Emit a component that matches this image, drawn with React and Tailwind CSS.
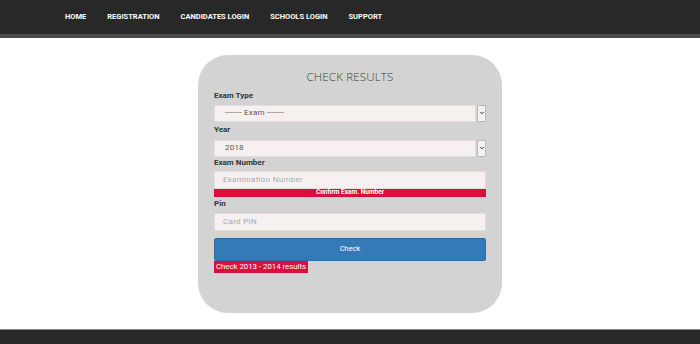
import { ChevronDown } from 'lucide-react'

const nav = ['HOME', 'REGISTRATION', 'CANDIDATES LOGIN', 'SCHOOLS LOGIN', 'SUPPORT']

function SelectBox({ value }) {
  return (
    <div className="flex h-[17px] gap-px">
      <div className="flex-1 bg-[#f6f0f0] border border-[#e2dcdc] flex items-center pl-[10px] text-[8px] text-[#555] tracking-[0.2px]">
        {value}
      </div>
      <div className="w-[9px] bg-[#f2f2f2] border border-[#b8b8b8] rounded-[1px] flex items-center justify-center">
        <ChevronDown size={6} strokeWidth={4} className="text-[#333]" />
      </div>
    </div>
  )
}

function Label({ children }) {
  return <div className="text-[8px] font-bold text-[#333] leading-none">{children}</div>
}

export default function App() {
  return (
    <div className="w-[700px] h-[344px] bg-white flex flex-col font-['Roboto',sans-serif]">
      {/* Top bar */}
      <div className="h-[34px] bg-[#282828] flex items-center pl-[65px] gap-[21px] shrink-0">
        {nav.map(n => (
          <span key={n} className="text-[7.5px] font-bold text-white">{n}</span>
        ))}
      </div>
      <div className="h-[4px] bg-[#4b4b4b] shrink-0" />

      {/* Card */}
      <div className="flex-1 flex justify-center pt-[17px]">
        <div className="w-[304px] h-[258px] bg-[#d3d3d3] rounded-[30px] px-[16px] pt-[16px]">
          <h1 className="text-center text-[11.5px] text-[#3a3a3a] font-['Open_Sans',sans-serif] font-light tracking-[0.2px] leading-none">
            CHECK RESULTS
          </h1>

          <div className="mt-[9px]"><Label>Exam Type</Label></div>
          <div className="mt-[5px]"><SelectBox value="------- Exam -------" /></div>

          <div className="mt-[4px]"><Label>Year</Label></div>
          <div className="mt-[6px]"><SelectBox value="2018" /></div>

          <div className="mt-[2px]"><Label>Exam Number</Label></div>
          <div className="mt-[4px] h-[18px] bg-[#f6f0f0] border border-[#e2dcdc] flex items-center pl-[8px] text-[8px] text-[#aaa] tracking-[0.3px]">
            Examination Number
          </div>
          <div className="h-[8px] bg-[#dc0f3c] flex items-center justify-center text-[6.5px] font-bold text-white leading-none">
            Confirm Exam. Number
          </div>

          <div className="mt-[3px]"><Label>Pin</Label></div>
          <div className="mt-[5px] h-[18px] bg-[#f6f0f0] border border-[#e2dcdc] flex items-center pl-[8px] text-[8px] text-[#aaa] tracking-[0.3px]">
            Card PIN
          </div>

          <div className="mt-[7px] h-[23px] bg-[#337ab7] border border-[#2e6da4] rounded-[2px] flex items-center justify-center text-[7.5px] text-white">
            Check
          </div>
          <div className="w-fit h-[12px] flex items-center bg-[#dc0f3c] text-white text-[7.8px] leading-none px-[2px]">
            Check 2013 - 2014 results
          </div>
        </div>
      </div>

      {/* Footer */}
      <div className="h-[15px] bg-[#282828] border-t border-[#888] shrink-0" />
    </div>
  )
}
